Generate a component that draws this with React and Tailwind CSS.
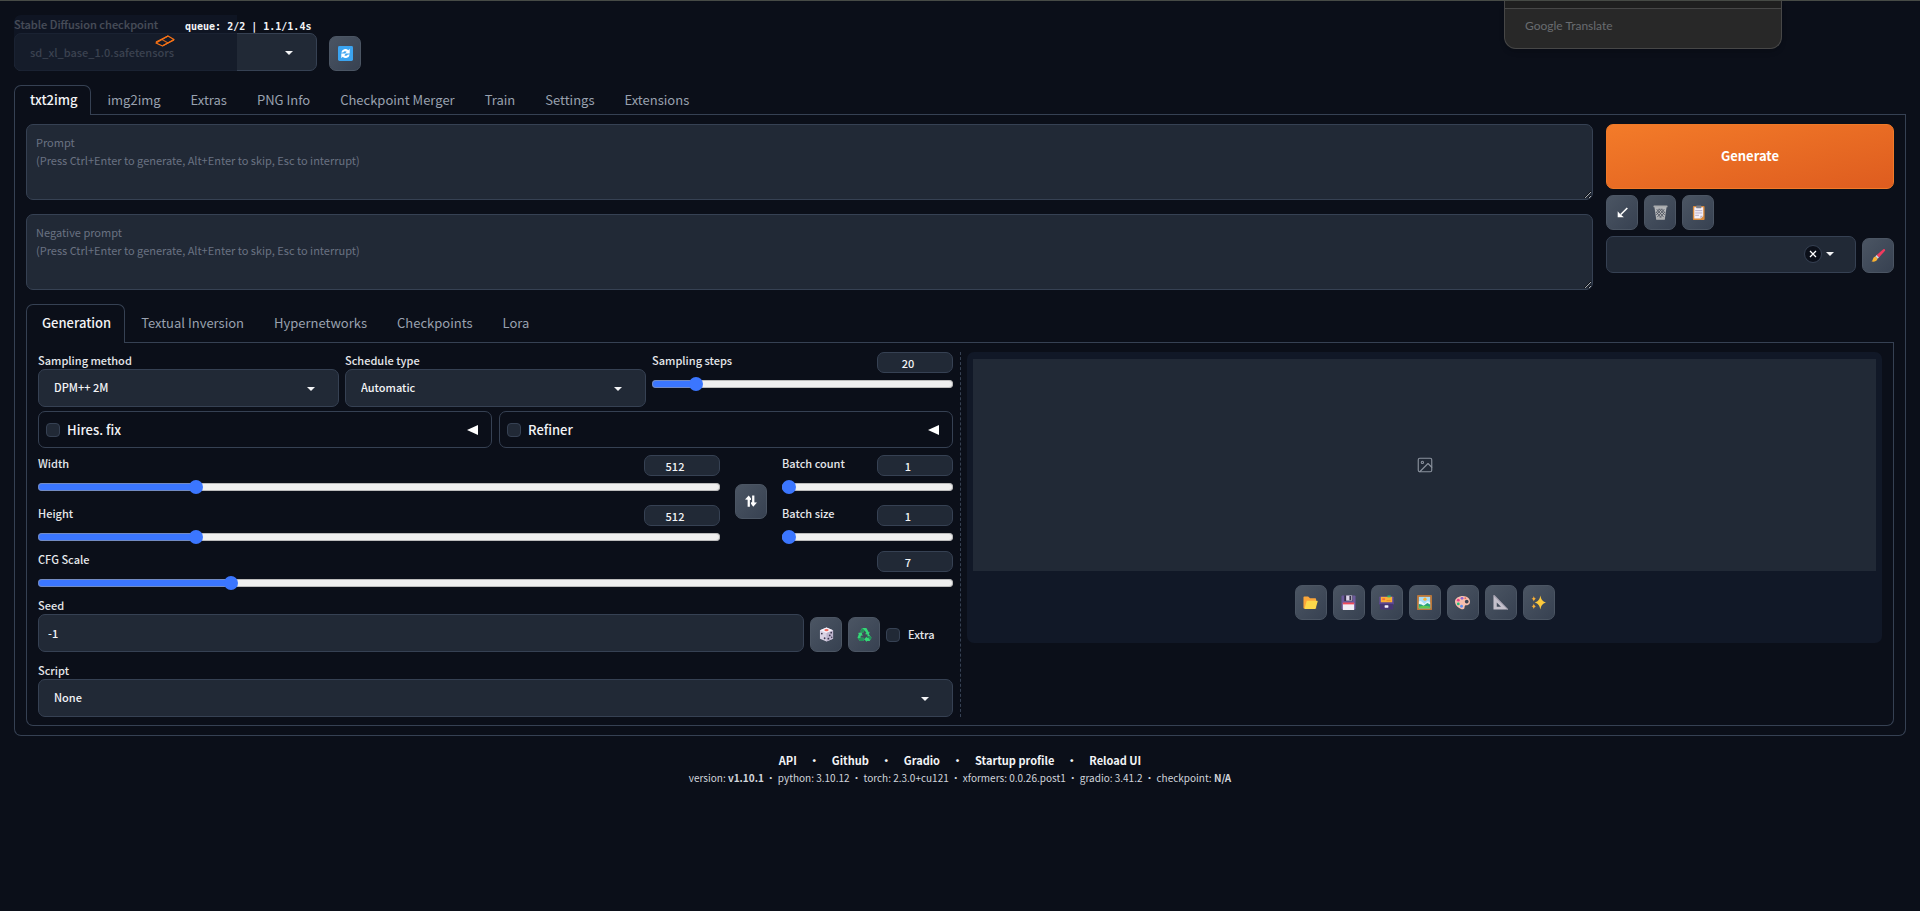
import React, { useState } from 'react';

const TABS = ['txt2img', 'img2img', 'Extras', 'PNG Info', 'Checkpoint Merger', 'Train', 'Settings', 'Extensions'];
const SUB_TABS = ['Generation', 'Textual Inversion', 'Hypernetworks', 'Checkpoints', 'Lora'];
const LINKS = ['API', 'Github', 'Gradio', 'Startup profile', 'Reload UI'];
const VERSIONS = [
  ['version', 'v1.10.1', true],
  ['python', '3.10.12'],
  ['torch', '2.3.0+cu121'],
  ['xformers', '0.0.26.post1'],
  ['gradio', '3.41.2'],
  ['checkpoint', 'N/A', true],
];

// --- icons ---
const Svg = ({ children, className = 'size-[15px]' }) => (
  <svg viewBox="0 0 32 32" className={className} aria-hidden="true">{children}</svg>
);

const RefreshIcon = () => (
  <Svg>
    <rect width="32" height="32" rx="3" fill="#3ba4f0" />
    <path d="M7 14a9 9 0 0 1 15-5l3-3v10H15l3.500-3.500A5 5 0 0 0 11 14z" fill="#fff" />
    <path d="M25 18a9 9 0 0 1-15 5l-3 3V16h10l-3.500 3.500A5 5 0 0 0 21 18z" fill="#fff" />
  </Svg>
);

const ArrowIcon = () => (
  <Svg className="size-[11px]">
    <path d="M30 3L11 22" stroke="#fff" strokeWidth="4.500" />
    <path d="M2 12v18h18l-6-5-7-7z" fill="#fff" />
  </Svg>
);

const TrashIcon = () => (
  <Svg>
    <path d="M3 4h26l-4 27H7z" fill="#b3b5b8" />
    <path d="M8 9l15 17M13 8l12 13M18 8l7 8M7 15l11 13M24 9L9 26M19 8L7 21M14 8l-7 8M25 15L14 28" stroke="#4b515c" strokeWidth="1.800" />
    <rect x="1" y="1" width="30" height="4" rx="1" fill="#a9abad" />
    <rect x="7" y="27" width="18" height="4" fill="#a9abad" />
  </Svg>
);

const ClipboardIcon = () => (
  <Svg>
    <rect x="4" y="2" width="25" height="30" rx="2" fill="#d98a3d" />
    <path d="M7 5h19v19l-5 5H7z" fill="#f3eef8" />
    <path d="M26 23l-6 6v-6z" fill="#b9b2c6" />
    <rect x="11" y="1" width="11" height="6" rx="1" fill="#7c7f88" />
    <path d="M9 12h15M9 17h15M9 22h8" stroke="#b4abc4" strokeWidth="2" />
  </Svg>
);

const BrushIcon = () => (
  <Svg>
    <path d="M27 2q4 0 3 4L17 20l-5-5z" fill="#f13a5e" />
    <path d="M12 15l5 5-3 3-5-5z" fill="#d4d8df" />
    <path d="M9 18l5 5c-2 6-7 7-13 6 4-3 2-9 8-11z" fill="#f9b233" />
  </Svg>
);

const DiceIcon = () => (
  <Svg>
    <path d="M16 1l14 6v18l-14 6L2 25V7z" fill="#d9d2e4" />
    <path d="M16 1l14 6-14 6L2 7z" fill="#f5f1fa" />
    <path d="M16 13l14-6v18l-14 6z" fill="#bdb4cd" />
    <ellipse cx="16" cy="6.500" rx="4.500" ry="2.500" fill="#f0685c" />
    <g fill="#3e3850">
      <circle cx="6" cy="14" r="1.900" /><circle cx="12" cy="24" r="1.900" />
      <circle cx="26" cy="12" r="1.900" /><circle cx="23" cy="18" r="1.900" /><circle cx="20" cy="25" r="1.900" />
      <circle cx="27" cy="22" r="1.600" />
    </g>
  </Svg>
);

const RecycleIcon = () => (
  <Svg>
    <path d="M11 2h9l5 9 2-1-2 7-8-2 3-2-4-6-3 5-6-3z" fill="#35d877" />
    <path d="M16 7l-3 5-6-3 4-7z" fill="#25915a" />
    <path d="M2 13l8-2 2 8-3-1-2 4 2 1h5v7H6l-5-7 3-8z" fill="#35d877" />
    <path d="M9 23h5v7H6l-4-6z" fill="#25915a" />
    <path d="M25 15l6 8-4 7h-6v2l-6-6 6-6v3h4l-3-5z" fill="#35d877" />
    <path d="M28 19l3 4-3 5-4-5-2-4z" fill="#25915a" />
  </Svg>
);

const FolderIcon = () => (
  <Svg>
    <path d="M1 5q0-2 2-2h8l4 4h11q2 0 2 2v20H3q-2 0-2-2z" fill="#fba63a" />
    <path d="M8 12h22q2 0 1 3l-4 13q-1 2-3 2H3z" fill="#fbd84b" />
  </Svg>
);

const FloppyIcon = () => (
  <Svg>
    <path d="M1 3q0-2 2-2h26q2 0 2 2v26q0 2-2 2H3q-2 0-2-2z" fill="#6c5a9c" />
    <rect x="7" y="1" width="18" height="12" fill="#35304a" />
    <rect x="11" y="1" width="13" height="11" fill="#dcd5e8" />
    <rect x="18" y="2" width="4" height="9" fill="#35304a" />
    <rect x="4" y="17" width="24" height="15" fill="#f1edf6" />
    <rect x="4" y="16" width="24" height="4" fill="#ef4a5a" />
  </Svg>
);

const FileBoxIcon = () => (
  <Svg>
    <rect x="1" y="3" width="30" height="15" rx="2" fill="#6b4fa0" />
    <rect x="4" y="4" width="24" height="12" fill="#fbb035" />
    <path d="M18 1h7v4h-7z" fill="#2fb56a" />
    <path d="M7 7h6v4H7z" fill="#f26b3c" />
    <path d="M16 11h9v2h-9z" fill="#e98a2c" />
    <path d="M0 16h32v4H0z" fill="#5b4690" />
    <rect x="2" y="19" width="28" height="12" rx="1" fill="#463673" />
    <rect x="12" y="22" width="8" height="5" rx="1" fill="#f4f0fa" />
  </Svg>
);

const PictureIcon = () => (
  <Svg>
    <rect width="32" height="32" rx="1" fill="#b9763a" />
    <rect x="4" y="4" width="24" height="24" fill="#a9dcf8" />
    <circle cx="17" cy="9" r="3.500" fill="#f9b233" />
    <path d="M4 14q4-3 7 1l5 4 5-5q3-2 7 2v12H4z" fill="#e6f5fb" />
    <path d="M4 19q6 0 10 4l8-6 6 3v8H4z" fill="#28a27c" />
    <path d="M4 25q12-4 24 0v3H4z" fill="#5fc94f" />
  </Svg>
);

const PaletteIcon = () => (
  <Svg>
    <path d="M17 2c9 0 15 6 15 12 0 7-5 8-9 8-3 0-2 3-3 6-2 4-8 2-12-1C3 24 0 19 0 14 0 7 8 2 17 2z" fill="#f7bfae" />
    <circle cx="25" cy="14" r="4" fill="#3d4452" />
    <circle cx="15" cy="7" r="3" fill="#8d63d2" />
    <circle cx="7" cy="11" r="3" fill="#f0408c" />
    <circle cx="7" cy="19" r="3" fill="#2dbf7a" />
    <circle cx="14" cy="24" r="3" fill="#5a8df0" />
    <circle cx="22" cy="7" r="2" fill="#f0685c" />
  </Svg>
);

const TriangleRulerIcon = () => (
  <Svg>
    <path d="M1 0l31 31H1zM8 16v9h9z" fill="#c4c0cb" fillRule="evenodd" />
    <path d="M3 0l29 30v2L1 2z" fill="#aaa5b4" />
  </Svg>
);

const SparklesIcon = () => (
  <Svg>
    <path d="M20 1c2 9 4 12 12 15-8 3-10 6-12 15-2-9-4-12-12-15 8-3 10-6 12-15z" fill="#fcc93c" />
    <path d="M6 2c1 4 2 5 5 6-3 1-4 2-5 6-1-4-2-5-5-6 3-1 4-2 5-6zM6 18c1 4 2 5 5 6-3 1-4 2-5 6-1-4-2-5-5-6 3-1 4-2 5-6z" fill="#fbb035" />
  </Svg>
);

const SwapIcon = () => (
  <Svg className="size-3">
    <path d="M10 31V6M22 1v24" stroke="#fff" strokeWidth="6" />
    <path d="M0 12l10-11 6 8v4zM32 20l-10 11-6-8v-4z" fill="#fff" />
  </Svg>
);

const EmptyImageIcon = () => (
  <svg viewBox="0 0 24 24" className="size-[18px]" fill="none" stroke="#8b929e" strokeWidth="1.500" strokeLinecap="round" strokeLinejoin="round">
    <rect x="3" y="3" width="18" height="18" rx="2" />
    <circle cx="8.500" cy="8.500" r="1.500" />
    <path d="M21 15l-5-5L5 21" />
  </svg>
);

const LoadingIcon = () => (
  <svg viewBox="0 0 20 12" className="h-3 w-5" fill="none" stroke="#f97316" strokeLinejoin="round">
    <path d="M13 1l6 3.500L7.500 11 1 8z" strokeWidth="1.300" />
    <path d="M7 4.500L13 8" strokeWidth="1.200" opacity="0.800" />
    <path d="M1 7L13 1M8 10.500L19 5" strokeWidth="1.300" />
  </svg>
);

const Caret = ({ className = '' }) => (
  <svg viewBox="0 0 8 4" className={`pointer-events-none h-1 w-2 ${className}`}>
    <path d="M0 0h8L4 4z" fill="#f3f4f6" />
  </svg>
);

// --- controls ---
const ToolButton = ({ title, children }) => (
  <button
    type="button"
    title={title}
    className="flex h-[35px] w-8 shrink-0 items-center justify-center rounded-[7px] border border-[#4b5563] bg-linear-to-br from-[#4b5563] to-[#374151]"
  >
    {children}
  </button>
);

const Select = ({ id, label, value }) => (
  <div className="min-w-0 flex-1">
    <label htmlFor={id} className="block h-[17px] text-[11px] font-medium leading-[17px] text-gray-200">{label}</label>
    <div className="relative">
      <select id={id} className="block h-[38px] w-full appearance-none rounded-[7px] border border-gray-700 bg-[#212936] px-[15px] pb-0.5 text-[11px] font-medium text-gray-100">
        <option>{value}</option>
      </select>
      <Caret className="absolute right-6 top-[18px]" />
    </div>
  </div>
);

const Slider = ({ id, label, min, max, initial }) => {
  const [value, setValue] = useState(initial);
  const ratio = (value - min) / (max - min);
  const stop = `calc(7px + (100% - 14px) * ${ratio})`;
  const onChange = e => setValue(Number(e.target.value));

  return (
    <div className="min-w-0 flex-1">
      <div className="flex h-[22px] justify-between">
        <label htmlFor={id} className="text-[11px] font-medium leading-[17px] text-gray-200">{label}</label>
        <input
          type="number"
          aria-label={`${label} value`}
          value={value}
          onChange={onChange}
          className="h-[21px] w-[76px] rounded-[7px] border border-gray-700 bg-[#212936] pr-[14px] text-center text-[11px] font-medium leading-[19px] text-gray-100 [appearance:textfield] [&::-webkit-inner-spin-button]:appearance-none"
        />
      </div>
      <input
        id={id}
        type="range"
        min={min}
        max={max}
        value={value}
        onChange={onChange}
        style={{ backgroundImage: `linear-gradient(to right, #3b76ff ${stop}, #efefef ${stop})` }}
        className="mt-1.5 block h-2 w-full appearance-none rounded-full shadow-[inset_0_0_0_1px_#9a9a9a99] [&::-webkit-slider-thumb]:size-[14px] [&::-webkit-slider-thumb]:appearance-none [&::-webkit-slider-thumb]:rounded-full [&::-webkit-slider-thumb]:bg-[#3b76ff]"
      />
    </div>
  );
};

const Checkbox = ({ id }) => (
  <input id={id} type="checkbox" className="size-[14px] shrink-0 appearance-none rounded-[4px] border border-gray-700 bg-[#212936] checked:bg-blue-600" />
);

const Accordion = ({ id, label }) => (
  <div className="flex h-[37px] flex-1 items-center rounded-[7px] border border-gray-700 pl-[7px] pr-[13px]">
    <Checkbox id={id} />
    <label htmlFor={id} className="ml-[7px] text-[13px] font-medium leading-5 text-gray-100">{label}</label>
    <button type="button" aria-label={`Expand ${label}`} className="ml-auto">
      <svg viewBox="0 0 11 10" className="h-2.5 w-[11px]"><path d="M11 0v10L0 5z" fill="#fff" /></svg>
    </button>
  </div>
);

const Prompt = ({ id, label }) => (
  <textarea
    id={id}
    aria-label={label}
    placeholder={`${label}\n(Press Ctrl+Enter to generate, Alt+Enter to skip, Esc to interrupt)`}
    className="block h-[76px] w-full resize-y rounded-[7px] border border-gray-700 bg-[#212936] px-[9px] py-2 text-[11px] leading-[18px] text-gray-100 placeholder:text-gray-500"
  />
);

const TabBar = ({ tabs, tall }) => (
  <div role="tablist" className="flex border-b border-gray-700">
    {tabs.map((tab, i) => (
      <button
        key={tab}
        type="button"
        role="tab"
        aria-selected={i === 0}
        className={`-mb-px rounded-t-[7px] border border-b-0 pb-0.5 pl-[15px] pr-[13px] text-[13px] ${tall ? 'h-[39px]' : 'h-[30px]'} ${
          i === 0 ? 'border-gray-700 bg-[#0b0f19] font-medium text-gray-100' : 'border-transparent text-gray-400'
        }`}
      >
        {tab}
      </button>
    ))}
  </div>
);

const App = () => (
  <div className="relative min-h-screen border-t border-[#474b46] bg-[#0b0f19] font-['Noto_Sans_CJK_SC','Open_Sans',sans-serif] text-gray-100">
    {/* browser translate popup */}
    <div className="absolute right-[138px] top-0 h-12 w-[278px] rounded-b-xl border border-t-0 border-[#474747] bg-[#282828] shadow-md">
      <div className="h-2 border-b border-[#474747] bg-[#1f1f1f]" />
      <p className="px-5 pt-2 font-['Lato',sans-serif] text-[12px] leading-[18px] text-[#696c70]">Google Translate</p>
    </div>

    <main className="px-3.5 pt-3.5">
      {/* checkpoint row */}
      <div className="flex items-end gap-3">
        <div className="relative flex w-[303px] pt-px">
          <Select id="checkpoint" label="Stable Diffusion checkpoint" value="" />
          <div className="absolute inset-y-0 left-0 w-[223px] rounded-l-[7px] bg-[#111827]/75" />
          <div className="pointer-events-none absolute inset-0">
            <span className="absolute left-4 top-7 text-[11px] font-medium leading-[18px] text-[#3b4250]">sd_xl_base_1.0.safetensors</span>
            <span className="absolute left-[141px] top-5"><LoadingIcon /></span>
            <span className="absolute left-[171px] top-1 whitespace-nowrap font-['DejaVu_Sans_Mono',monospace] text-[10px] font-bold leading-4">queue: 2/2 | 1.1/1.4s</span>
          </div>
        </div>
        <ToolButton title="Refresh"><RefreshIcon /></ToolButton>
      </div>

      <div className="mt-3.5">
        <TabBar tabs={TABS} />
        <div className="rounded-b-[7px] border border-t-0 border-gray-700 px-[11px] pb-[9px] pt-[9px]">
          {/* prompts + actions */}
          <div className="flex gap-[13px]">
            <div className="flex min-w-0 flex-1 flex-col gap-3.5">
              <Prompt id="prompt" label="Prompt" />
              <Prompt id="negative" label="Negative prompt" />
            </div>
            <div className="flex w-72 flex-col gap-1.5">
              <button type="button" className="h-[65px] rounded-[7px] border border-[#f07a28] bg-linear-to-br from-[#f37b29] to-[#de5c1f] pb-0.5 text-[13px] font-bold text-white">
                Generate
              </button>
              <div className="flex gap-1.5">
                <ToolButton title="Read generation parameters"><ArrowIcon /></ToolButton>
                <ToolButton title="Clear prompt"><TrashIcon /></ToolButton>
                <ToolButton title="Apply styles"><ClipboardIcon /></ToolButton>
              </div>
              <div className="flex items-end gap-1.5">
                <div className="relative flex-1">
                  <input aria-label="Styles" className="block h-[37px] w-full rounded-[7px] border border-gray-700 bg-[#212936] px-3 text-[11px]" />
                  <div className="absolute right-[22px] top-[9px] flex items-center gap-1">
                    <button type="button" aria-label="Clear styles" className="flex size-[18px] items-center justify-center rounded-full border border-gray-700 bg-[#0b0f19]">
                      <svg viewBox="0 0 8 8" className="size-2"><path d="M1 1l6 6M7 1L1 7" stroke="#fff" strokeWidth="1.300" /></svg>
                    </button>
                    <Caret />
                  </div>
                </div>
                <ToolButton title="Edit styles"><BrushIcon /></ToolButton>
              </div>
            </div>
          </div>

          <div className="mt-3.5">
            <TabBar tabs={SUB_TABS} tall />
            <div className="flex rounded-b-[7px] border border-t-0 border-gray-700 px-[11px] pb-2 pt-[9px]">
              {/* settings */}
              <div className="min-w-0 flex-1">
                <div className="flex gap-1.5">
                  <Select id="sampler" label="Sampling method" value="DPM++ 2M" />
                  <Select id="scheduler" label="Schedule type" value="Automatic" />
                  <Slider id="steps" label="Sampling steps" min={1} max={150} initial={20} />
                </div>
                <div className="mt-1 flex gap-[7px]">
                  <Accordion id="hires" label="Hires. fix" />
                  <Accordion id="refiner" label="Refiner" />
                </div>
                <div className="mt-[7px] flex items-center">
                  <div className="flex min-w-0 flex-1 flex-col gap-3.5">
                    <Slider id="width" label="Width" min={64} max={2048} initial={512} />
                    <Slider id="height" label="Height" min={64} max={2048} initial={512} />
                  </div>
                  <div className="mx-[15px] pt-1.5"><ToolButton title="Switch width/height"><SwapIcon /></ToolButton></div>
                  <div className="flex w-[171px] flex-col gap-3.5">
                    <Slider id="count" label="Batch count" min={1} max={100} initial={1} />
                    <Slider id="size" label="Batch size" min={1} max={8} initial={1} />
                  </div>
                </div>
                <div className="mt-2.5 flex">
                  <Slider id="cfg" label="CFG Scale" min={1} max={30} initial={7} />
                </div>
                <div className="mt-2.5 flex items-end gap-1.5">
                  <div className="flex-1">
                    <label htmlFor="seed" className="block h-[17px] text-[11px] font-medium leading-[17px] text-gray-200">Seed</label>
                    <input id="seed" type="text" defaultValue="-1" className="block h-[38px] w-full rounded-[7px] border border-gray-700 bg-[#212936] px-[9px] text-[11px] font-medium" />
                  </div>
                  <ToolButton title="Random seed"><DiceIcon /></ToolButton>
                  <ToolButton title="Reuse seed"><RecycleIcon /></ToolButton>
                  <div className="flex h-[35px] w-[67px] items-center gap-2">
                    <Checkbox id="extra" />
                    <label htmlFor="extra" className="text-[11px] font-medium leading-[17px] text-gray-200">Extra</label>
                  </div>
                </div>
                <div className="mt-2.5 flex">
                  <Select id="script" label="Script" value="None" />
                </div>
              </div>

              <div className="ml-[7px] mr-[6px] w-px border-l border-dashed border-gray-700" />

              {/* gallery */}
              <div className="min-w-0 flex-1">
                <div className="rounded-[7px] bg-[#111827] px-1.5 pb-[23px] pt-[7px]">
                  <div className="flex h-[212px] items-center justify-center bg-[#212936]">
                    <EmptyImageIcon />
                  </div>
                  <div className="mt-3.5 flex justify-center gap-1.5">
                    <ToolButton title="Open folder"><FolderIcon /></ToolButton>
                    <ToolButton title="Save"><FloppyIcon /></ToolButton>
                    <ToolButton title="Save zip"><FileBoxIcon /></ToolButton>
                    <ToolButton title="Send to img2img"><PictureIcon /></ToolButton>
                    <ToolButton title="Send to inpaint"><PaletteIcon /></ToolButton>
                    <ToolButton title="Send to extras"><TriangleRulerIcon /></ToolButton>
                    <ToolButton title="Upscale"><SparklesIcon /></ToolButton>
                  </div>
                </div>
              </div>
            </div>
          </div>
        </div>
      </div>
    </main>

    <footer className="mt-3.5 text-center">
      <nav className="flex justify-center gap-3 text-[11px] font-bold leading-5">
        {LINKS.map((link, i) => (
          <React.Fragment key={link}>
            {i > 0 && <span>•</span>}
            <a href="#">{link}</a>
          </React.Fragment>
        ))}
      </nav>
      <p className="flex justify-center gap-0.5 text-[10px] leading-4 text-gray-300">
        {VERSIONS.map(([name, value, bold], i) => (
          <React.Fragment key={name}>
            {i > 0 && <span>•</span>}
            <span>{name}: <span className={bold ? 'font-bold' : ''}>{value}</span></span>
          </React.Fragment>
        ))}
      </p>
    </footer>
  </div>
);

export default App;
